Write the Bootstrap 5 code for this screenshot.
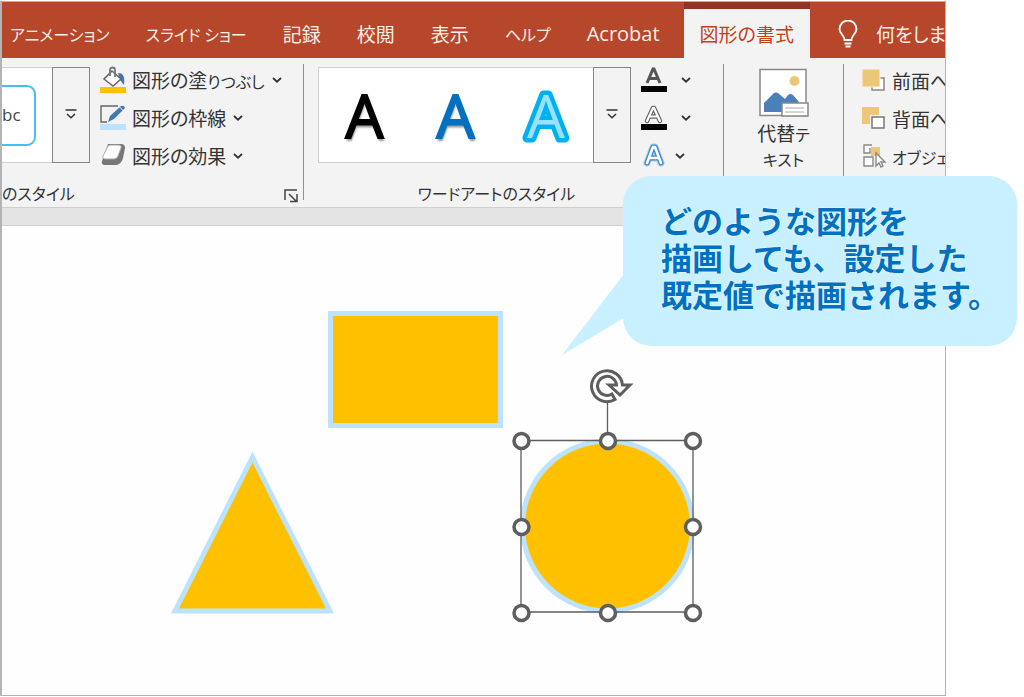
<!DOCTYPE html>
<html lang="ja">
<head>
<meta charset="utf-8">
<meta name="viewport" content="width=device-width, initial-scale=1">
<title>図形の書式</title>
<link href="https://cdn.jsdelivr.net/npm/bootstrap@5.3.0/dist/css/bootstrap.min.css" rel="stylesheet">
<style>
body{font-family:"Noto Sans CJK JP",sans-serif;font-size:19px;line-height:24px;color:#333;font-feature-settings:"palt";background:#fff}
button{font-feature-settings:inherit;color:inherit}
.stage{padding:1px 78px 1px 0}
.app-window{border:1px solid #b4b4b4;border-left-width:2px;background:#fefefe;min-height:calc(100vh - 2px)}
.tabs-bar{background:#b7472a;height:56px}
.tabs-bar .nav-link{color:#fbeee9;padding:20px 18px 12px}
.tabs-bar .nav-link.active{color:#c43e1c;background:#f3f3f3;border-top:7px solid #8e3620;padding:13px 16px 12px;margin:0 8px 0 6px}
.latin{font-family:"Open Sans",sans-serif;font-size:20px}
.kana{font-size:16px}
.ribbon{background:#f3f3f3;height:150px;padding:6px 0 7px;border-bottom:1px solid #cfcfcf}
.group{border-right:1px solid #919191;padding-top:3px}
.group-fill{width:302px}
.group-art{width:420px;padding-left:14px}
.group-alt{width:120px}
.group-body{height:96px}
.group-label{height:38px;padding-top:18px}
.gallery{background:#fff;border:1px solid #d0d0d0}
.shape-gallery{width:50px}
.art-gallery{width:275px}
.more{width:38px;border:1px solid #868686;background:#f3f3f3}
.cmds{padding-left:10px;margin-top:-3px;gap:6px}
.cmd{border:0;background:none;height:32px;gap:5px;flex-shrink:0}
.cmd .arrow{margin-left:2px}
.sample{border:2px solid #40c0f5;border-left:0;border-radius:0 9px 9px 0;width:34px;height:61px;font:17px/56px "Open Sans",sans-serif;color:#444}
.art{border:0;background:none;width:91px;font:60px/94px "Open Sans",sans-serif;-webkit-text-stroke:2px currentColor;text-shadow:1px 3px 2px #999}
.art-black{color:#000}
.art-blue{color:#0070c0}
.art-glow{-webkit-text-stroke:0;text-shadow:none}
.art-glow text{font:60px "Open Sans",sans-serif;fill:#99e2ff;stroke:#00b0f0;stroke-width:9px;stroke-linejoin:round;paint-order:stroke fill}
.art-glow .inner{stroke:#99e2ff;stroke-width:2px}
.strip{background:#e4e4e4;height:18px;border-bottom:1px solid #cfcfcf}
.callout-box{right:7px;top:176px;width:394px;padding:25px 0 34px 38px;background:#c9f0ff;border-radius:28px;color:#0070c0;font-size:31px;line-height:37px;font-weight:700;font-feature-settings:normal;text-shadow:0 0 2px #fff}
.callout-tail{left:-61px;top:98px}
</style>
</head>
<body>
<svg class="d-none">
<symbol id="chev" viewBox="0 0 10 6"><path d="M1 1l4 3.7L9 1" fill="none" stroke="#333" stroke-width="1.8"/></symbol>
<symbol id="drop" viewBox="0 0 12 10"><path d="M.5 1h11M2 5l4 3.7L10 5" fill="none" stroke="#333" stroke-width="1.5"/></symbol>
</svg>
<div class="stage position-relative">
<main class="app-window overflow-hidden">
<nav class="nav tabs-bar flex-nowrap text-nowrap overflow-hidden">
<a class="nav-link kana ps-2" href="#">アニメーション</a>
<a class="nav-link kana" href="#">スライド ショー</a>
<a class="nav-link" href="#">記録</a>
<a class="nav-link" href="#">校閲</a>
<a class="nav-link" href="#">表示</a>
<a class="nav-link kana" href="#">ヘルプ</a>
<a class="nav-link latin" href="#">Acrobat</a>
<a class="nav-link active" href="#">図形の書式</a>
<a class="nav-link d-flex gap-3 align-items-center" href="#"><svg class="flex-shrink-0" width="24" height="28" viewBox="0 0 24 28" fill="none" stroke="#fff" stroke-width="1.8"><path d="M8.5 20c0-5-5-6-5-11a8.5 8.5 0 0 1 17 0c0 5-5 6-5 11zM8.5 23.500h7M9.500 26.500h5"/></svg><span>何をします</span></a>
</nav>
<section class="ribbon d-flex overflow-hidden text-nowrap">
<div class="group group-fill flex-shrink-0">
<div class="group-body d-flex">
<div class="gallery shape-gallery border-start-0 border-end-0 d-flex align-items-center"><div class="sample">bc</div></div>
<button class="more p-0" aria-label="スタイル一覧"><svg class="mb-2" width="12" height="10"><use href="#drop"/></svg></button>
<div class="cmds d-flex flex-column">
<button class="cmd p-0 d-flex align-items-center"><svg width="27" height="28" viewBox="0 0 27 28"><path d="M0 21h26v6H0z" fill="#ffc000"/><path d="M18 7c5 0 7 3 6 12l-4-5z" fill="#3f78b5"/><path d="M12 5l9 8-8 7-9-7z" fill="#fff" stroke="#666" stroke-width="1.500"/><path d="M10 10V4a2.500 2.500 0 0 1 5 0v7" fill="none" stroke="#777" stroke-width="1.800"/></svg><span>図形の塗<span class="kana">りつぶし</span></span><svg class="arrow" width="10" height="6"><use href="#chev"/></svg></button>
<button class="cmd p-0 d-flex align-items-center"><svg width="27" height="28" viewBox="0 0 27 28"><path d="M0 20h26v6H0z" fill="#bde3fc"/><path d="M18 2H1v16h6" fill="none" stroke="#666" stroke-width="1.400"/><path d="M8 18l2-6L21 2q3-1 4 2L14 15z" fill="#3f78b5"/><path d="M19.500 3l4 4" stroke="#f3f3f3"/></svg>図形の枠線<svg class="arrow" width="10" height="6"><use href="#chev"/></svg></button>
<button class="cmd p-0 d-flex align-items-center"><svg width="27" height="28" viewBox="0 0 27 28"><path d="M8 2h13q4 0 4 4l-2 10q-1 5-6 7H5q-4 0-3-4z" fill="#777"/><path d="M10 3h8q4 0 3 3l-3 8q-1 3-4 3H6q-4 0-3-3l4-8q1-3 3-3z" fill="#fff" stroke="#aaa"/></svg>図形の効果<svg class="arrow" width="10" height="6"><use href="#chev"/></svg></button>
</div>
</div>
<div class="group-label d-flex justify-content-between kana pe-1"><span>のスタイル</span><button class="border-0 bg-transparent p-0" aria-label="図形の書式設定"><svg width="15" height="15" viewBox="0 0 15 15" fill="none" stroke="#444" stroke-width="1.500"><path d="M1 12V2h12M5 6l7 7M13 6v7.500H6"/></svg></button></div>
</div>
<div class="group group-art flex-shrink-0">
<div class="group-body d-flex">
<div class="gallery art-gallery border-end-0 d-flex">
<button class="art art-black p-0">A</button><button class="art art-blue p-0">A</button><button class="art art-glow p-0 d-flex"><svg width="91" height="94"><text x="45" y="70" text-anchor="middle">A</text><text class="inner" x="45" y="70" text-anchor="middle" aria-hidden="true"></text></svg></button>
</div>
<button class="more p-0" aria-label="ワードアート一覧"><svg class="mb-2" width="12" height="10"><use href="#drop"/></svg></button>
<div class="cmds d-flex flex-column">
<button class="cmd p-0 d-flex align-items-center" aria-label="文字の塗りつぶし"><svg width="27" height="28" viewBox="0 0 27 28"><path d="M0 20h26v6H0z"/><path d="M6 17l6-14h1l6 14M8 12.500h9" fill="none" stroke="#555" stroke-width="3"/></svg><svg class="arrow ms-2" width="10" height="6"><use href="#chev"/></svg></button>
<button class="cmd p-0 d-flex align-items-center" aria-label="文字の輪郭"><svg width="27" height="28" viewBox="0 0 27 28"><path d="M0 20h26v6H0z"/><path d="M6 17l6-13h1l6 13M8 12.500h9" fill="none" stroke="#666" stroke-width="4.500" stroke-linejoin="round" stroke-linecap="round"/><path d="M6 17l6-13h1l6 13M8 12.500h9" fill="none" stroke="#fff" stroke-width="2.200" stroke-linecap="round"/></svg><svg class="arrow ms-2" width="10" height="6"><use href="#chev"/></svg></button>
<button class="cmd p-0 d-flex align-items-center" aria-label="文字の効果"><svg width="27" height="28" viewBox="0 0 27 28" fill="none" stroke-linecap="round" stroke-linejoin="round"><path d="M6 21L12 5h2l6 16M8 16h10" stroke="#a9cdee" stroke-width="7"/><path d="M6 21L12 5h2l6 16M8 16h10" stroke="#3a86cb" stroke-width="5"/><path d="M6 21L12 5h2l6 16M8 16h10" stroke="#fff" stroke-width="2.600"/></svg><svg class="arrow" width="10" height="6"><use href="#chev"/></svg></button>
</div>
</div>
<div class="group-label kana text-center pe-5">ワードアートのスタイル</div>
</div>
<div class="group group-alt flex-shrink-0">
<button class="border-0 bg-transparent p-0 w-100 d-flex flex-column align-items-center"><svg class="mb-1" width="50" height="50" viewBox="0 0 50 50"><path d="M1 2.500h46v46H1z" fill="#fff" stroke="#888" stroke-width="1.500"/><circle cx="35.500" cy="14" r="5" fill="#edc67a"/><path d="M5 45V36L15 26q2-1 4 0l7 6 3-4q2-2 5 0l6 7v10z" fill="#4a7fb8"/><path d="M23 36h26v13H23z" fill="#fff" stroke="#888" stroke-width="1.500"/><path d="M26 41h19M26 45h19" stroke="#aaa"/></svg><span>代替<span class="kana">テ<br>キスト</span></span></button>
</div>
<div class="flex-shrink-0 ps-2 pt-1"><div class="cmds d-flex flex-column">
<button class="cmd p-0 d-flex align-items-center"><svg width="25" height="28" viewBox="0 0 25 28"><path d="M10 11h12v12H10z" fill="#fff" stroke="#888" stroke-width="1.500"/><path d="M0 2h18v18H0z" fill="#edc67a" stroke="#f3f3f3"/></svg>前面へ</button>
<button class="cmd p-0 d-flex align-items-center"><svg width="25" height="28" viewBox="0 0 25 28"><path d="M0 2h17v17H0z" fill="#edc67a"/><path d="M8 10h16v15H8z" fill="#f3f3f3"/><path d="M10 12h12v11H10z" fill="#fff" stroke="#777" stroke-width="1.500"/></svg>背面へ</button>
<button class="cmd p-0 d-flex align-items-center"><svg width="25" height="28" viewBox="0 0 25 28" fill="#fff" stroke="#888" stroke-width="1.400"><path d="M9 4h9v9H9z" fill="#edc67a" stroke="none"/><path d="M10 2H2v8h6V5M2 14h9v9H2z"/><path d="M14 10v13l3-3 2 4 2-1-2-4h4z"/></svg><span class="kana">オブジェ</span></button>
</div></div>
</section>
<div class="strip"></div>
<svg class="d-block w-100" viewBox="2 226 943 468" role="img" aria-label="長方形、三角形、円">
<g fill="#ffc000" stroke="#bde3fc" stroke-width="5">
<path d="M330.500 313.500h170v112h-170zM252.500 457L330 611H175z"/>
<circle cx="607.500" cy="526" r="85"/>
</g>
<g fill="none" stroke="#5e5e5e">
<path d="M521 440.500h172v171.500H521zM607.500 401v40" stroke-width="1.300"/>
<g fill="#fff" stroke-width="3.500"><circle cx="521.500" cy="441" r="7.500"/><circle cx="608" cy="441" r="7.500"/><circle cx="693" cy="441" r="7.500"/><circle cx="521.500" cy="527" r="7.500"/><circle cx="693" cy="527" r="7.500"/><circle cx="521.500" cy="613" r="7.500"/><circle cx="608" cy="613" r="7.500"/><circle cx="693" cy="613" r="7.500"/></g>
<path d="M615 399.500A15.500 15.500 0 1 1 622.500 385H630L620 395l-11-10h7.500A9.500 9.500 0 1 0 612 394z" fill="#fff" stroke-width="3"/>
</g>
</svg>
</main>
<aside class="callout-box position-absolute"><svg class="callout-tail position-absolute" width="62" height="82" viewBox="0 0 62 82"><path d="M62 0L0 81l62-37z" fill="#c9f0ff"/></svg>どのような図形を<br>描画しても、設定した<br>既定値で描画されます。</aside>
</div>
<script src="https://cdn.jsdelivr.net/npm/bootstrap@5.3.0/dist/js/bootstrap.bundle.min.js"></script>
</body>
</html>
